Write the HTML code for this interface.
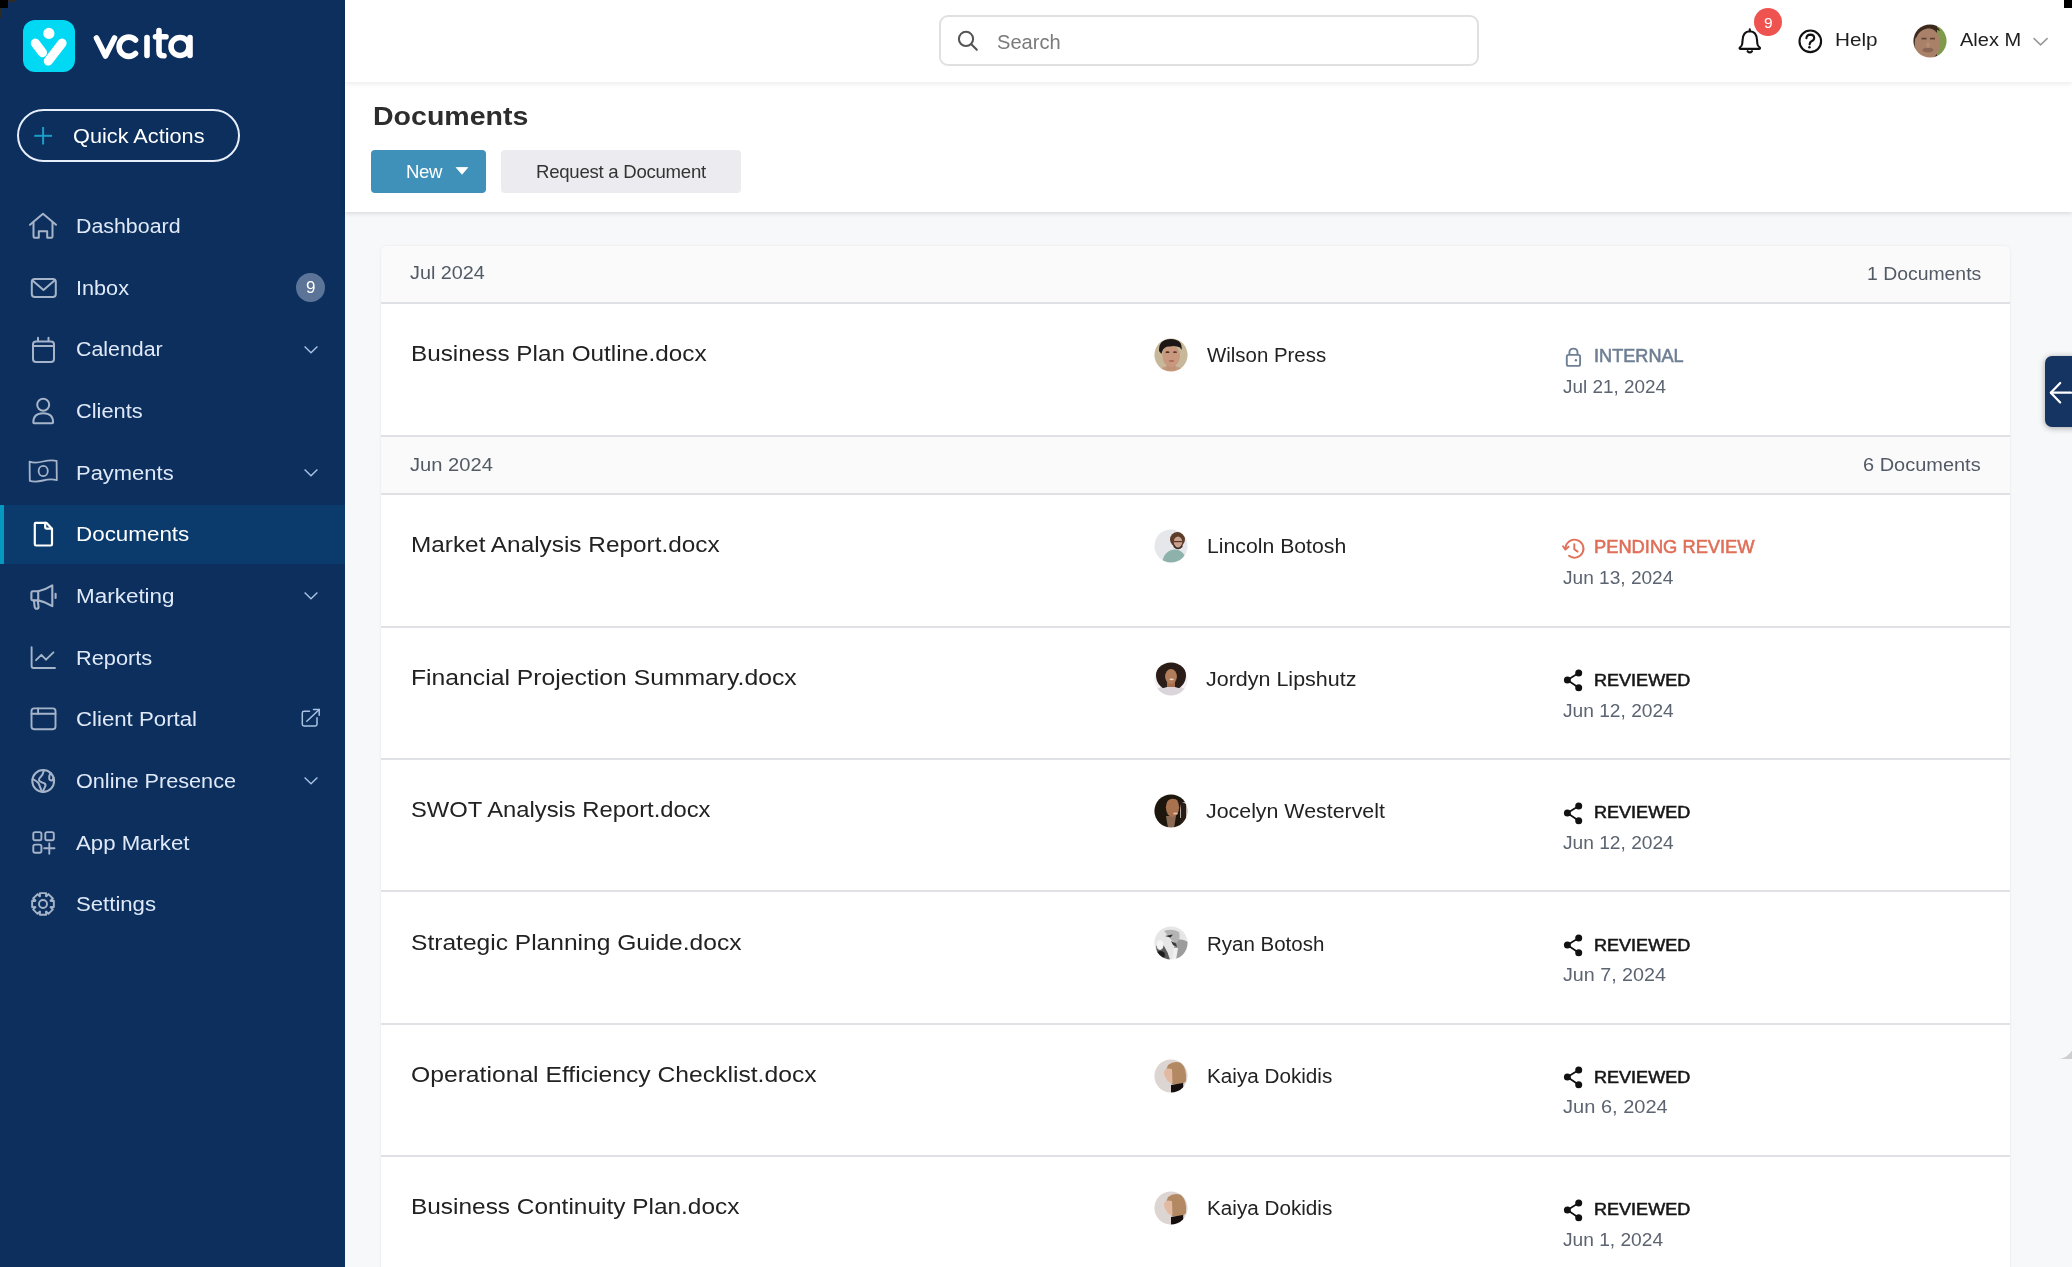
<!DOCTYPE html>
<html><head><meta charset="utf-8"><style>
html,body{margin:0;padding:0;width:2072px;height:1267px;overflow:hidden;background:#f7f8fa}
body{position:relative;font-family:"Liberation Sans",sans-serif}
.t{position:absolute;white-space:nowrap;line-height:1;will-change:transform}
svg{overflow:visible}
</style></head><body>
<svg width="0" height="0" style="position:absolute"><defs><filter id="blr" x="-10%" y="-10%" width="120%" height="120%"><feGaussianBlur stdDeviation="0.7"/></filter></defs></svg>
<div style="position:absolute;left:0;top:0;width:345px;height:1267px;background:#0c2f5e"></div>
<div style="position:absolute;left:0;top:505px;width:345px;height:59px;background:#0a3b6c"></div>
<div style="position:absolute;left:0;top:505px;width:4px;height:59px;background:#0798c0"></div>
<svg style="position:absolute;left:23px;top:20px" width="52" height="52" viewBox="0 0 52 52">
<rect x="0" y="0" width="52" height="52" rx="12" fill="#01d8f4"/>
<circle cx="25.9" cy="13.4" r="5.6" fill="#fff"/>
<line x1="12.4" y1="23.2" x2="19.4" y2="32.6" stroke="#fff" stroke-width="9.2" stroke-linecap="round"/>
<line x1="39" y1="23.2" x2="25.3" y2="41" stroke="#fff" stroke-width="9.2" stroke-linecap="round"/>
</svg>
<svg style="position:absolute;left:88px;top:22px" width="112" height="42" viewBox="88 22 112 42">
<g fill="none" stroke="#fff" stroke-width="5.6" stroke-linecap="round" stroke-linejoin="round">
<polyline points="96.5,38 105.5,56 114.5,38"/>
<path d="M135.5,40 A9.6,9.6 0 1 0 135.5,53.5"/>
<line x1="147" y1="37.5" x2="147" y2="55.5"/>
<path d="M159,30.5 L159,51.5 Q159,55.8 164,55.8"/>
<line x1="155.5" y1="36.8" x2="166" y2="36.8"/>
<circle cx="180" cy="46.5" r="9"/>
<line x1="190" y1="37.5" x2="190" y2="55.5"/>
</g></svg>
<div style="position:absolute;left:17px;top:109px;width:223px;height:53px;box-sizing:border-box;border:2px solid #e6eefa;border-radius:27px"></div>
<svg style="position:absolute;left:33px;top:126px" width="20" height="20" viewBox="0 0 20 20">
<g stroke="#1b9ec8" stroke-width="2"><line x1="10.1" y1="1" x2="10.1" y2="18.5"/><line x1="1.3" y1="9.8" x2="19" y2="9.8"/></g></svg>
<div class="t" style="left:72.60px;top:126.89px;font-size:19.50px;color:#ffffff;transform:scaleX(1.1132);transform-origin:0 0;">Quick Actions</div>
<div class="t" style="left:75.60px;top:217.19px;font-size:19.50px;color:#dfe9f7;transform:scaleX(1.0955);transform-origin:0 0;">Dashboard</div>
<div class="t" style="left:75.60px;top:278.84px;font-size:19.50px;color:#dfe9f7;transform:scaleX(1.1112);transform-origin:0 0;">Inbox</div>
<div class="t" style="left:75.60px;top:340.49px;font-size:19.50px;color:#dfe9f7;transform:scaleX(1.0957);transform-origin:0 0;">Calendar</div>
<div class="t" style="left:75.60px;top:402.14px;font-size:19.50px;color:#dfe9f7;transform:scaleX(1.1189);transform-origin:0 0;">Clients</div>
<div class="t" style="left:75.60px;top:463.79px;font-size:19.50px;color:#dfe9f7;transform:scaleX(1.1258);transform-origin:0 0;">Payments</div>
<div class="t" style="left:75.60px;top:525.44px;font-size:19.50px;color:#ffffff;transform:scaleX(1.1487);transform-origin:0 0;">Documents</div>
<div class="t" style="left:75.60px;top:587.09px;font-size:19.50px;color:#dfe9f7;transform:scaleX(1.1515);transform-origin:0 0;">Marketing</div>
<div class="t" style="left:75.60px;top:648.74px;font-size:19.50px;color:#dfe9f7;transform:scaleX(1.1162);transform-origin:0 0;">Reports</div>
<div class="t" style="left:75.60px;top:710.39px;font-size:19.50px;color:#dfe9f7;transform:scaleX(1.1392);transform-origin:0 0;">Client Portal</div>
<div class="t" style="left:75.60px;top:772.04px;font-size:19.50px;color:#dfe9f7;transform:scaleX(1.1099);transform-origin:0 0;">Online Presence</div>
<div class="t" style="left:75.60px;top:833.69px;font-size:19.50px;color:#dfe9f7;transform:scaleX(1.1374);transform-origin:0 0;">App Market</div>
<div class="t" style="left:75.60px;top:895.34px;font-size:19.50px;color:#dfe9f7;transform:scaleX(1.1355);transform-origin:0 0;">Settings</div>
<svg style="position:absolute;left:23px;top:206.20px" width="40" height="40" viewBox="0 0 40 40"><g fill="none" stroke="#a6b4c9" stroke-width="2" stroke-linecap="round" stroke-linejoin="round"><path d="M7,18.8 L20,7.8 L33,18.8"/><path d="M10.5,16.5 L10.5,30.6 Q10.5,31.8 11.7,31.8 L15.8,31.8 L15.8,25.2 L24.2,25.2 L24.2,31.8 L28.3,31.8 Q29.5,31.8 29.5,30.6 L29.5,16.5"/></g></svg>
<svg style="position:absolute;left:23px;top:261.85px" width="40" height="40" viewBox="0 0 40 40"><g fill="none" stroke="#a6b4c9" stroke-width="2" stroke-linecap="round" stroke-linejoin="round"><rect x="8.8" y="17" width="24" height="18" rx="3"/><path d="M9.5,18.5 L20.5,28 L31.5,18.5"/></g></svg>
<svg style="position:absolute;left:23px;top:323.50px" width="40" height="40" viewBox="0 0 40 40"><g fill="none" stroke="#a6b4c9" stroke-width="2" stroke-linecap="round" stroke-linejoin="round"><rect x="10" y="17.5" width="21" height="20.5" rx="3"/><line x1="10" y1="22" x2="31" y2="22"/><line x1="15" y1="13.8" x2="15" y2="17"/><line x1="25.5" y1="13.8" x2="25.5" y2="17"/></g></svg>
<svg style="position:absolute;left:23px;top:385.15px" width="40" height="40" viewBox="0 0 40 40"><g fill="none" stroke="#a6b4c9" stroke-width="2" stroke-linecap="round" stroke-linejoin="round"><circle cx="20.2" cy="19.8" r="6"/><path d="M10.3,37.5 Q10.3,28.3 20.2,28.3 Q30.1,28.3 30.1,37.5 Q30.1,38.3 29.2,38.3 L11.2,38.3 Q10.3,38.3 10.3,37.5 Z"/></g></svg>
<svg style="position:absolute;left:23px;top:446.80px" width="40" height="40" viewBox="0 0 40 40"><g fill="none" stroke="#a6b4c9" stroke-width="1.8" stroke-linecap="round" stroke-linejoin="round"><path d="M6.6,14.6 Q12,16.5 20,14.5 Q28,12.5 33.6,13.8 L33.8,33.2 Q28,31.6 20,33.5 Q12,35.4 6.8,33.8 Z"/><ellipse cx="20.2" cy="24" rx="4.6" ry="5.2"/></g></svg>
<svg style="position:absolute;left:23px;top:508.45px" width="40" height="40" viewBox="0 0 40 40"><g fill="none" stroke="#ffffff" stroke-width="2.2" stroke-linecap="round" stroke-linejoin="round"><path d="M12.5,14.8 Q11.8,14.8 11.8,16 L11.8,36.3 Q11.8,37.5 13,37.5 L27.8,37.5 Q29,37.5 29,36.3 L29,20.8 L23.4,14.8 Z"/><path d="M22.2,14.8 L22.2,19.6 Q22.2,20.6 23.2,20.6 L28.6,20.6"/></g></svg>
<svg style="position:absolute;left:23px;top:572.60px" width="40" height="40" viewBox="0 0 40 40"><g fill="none" stroke="#a6b4c9" stroke-width="2.1" stroke-linecap="round" stroke-linejoin="round"><path d="M9.8,18.2 L15.2,18.2 Q22,17 29.3,12.4 L29.3,33.2 Q22,28.6 15.2,27.4 L9.8,27.4 Q8.4,27.4 8.4,26 L8.4,19.6 Q8.4,18.2 9.8,18.2 Z"/><line x1="15.2" y1="18.2" x2="15.2" y2="27.4"/><path d="M11,27.6 L11.6,33.6 Q12,36 14,35.8 Q15.8,35.5 15.5,33.4 L14.8,28"/><line x1="32.6" y1="20.8" x2="32.6" y2="25"/></g></svg>
<svg style="position:absolute;left:23px;top:631.75px" width="40" height="40" viewBox="0 0 40 40"><g fill="none" stroke="#a6b4c9" stroke-width="1.9" stroke-linecap="round" stroke-linejoin="round"><path d="M8.6,15.3 L8.6,34 Q8.6,36 10.6,36 L32,36"/><polyline points="13,28.2 18.4,22.8 23,27.7 30.4,20.3"/></g></svg>
<svg style="position:absolute;left:23px;top:693.40px" width="40" height="40" viewBox="0 0 40 40"><g fill="none" stroke="#a6b4c9" stroke-width="1.9" stroke-linecap="round" stroke-linejoin="round"><rect x="8.5" y="15.4" width="24" height="20.8" rx="2.6"/><line x1="8.5" y1="20.8" x2="32.5" y2="20.8"/><line x1="15.1" y1="15.4" x2="15.1" y2="20.8"/></g></svg>
<svg style="position:absolute;left:23px;top:755.05px" width="40" height="40" viewBox="0 0 40 40"><g fill="none" stroke="#a6b4c9" stroke-width="2" stroke-linecap="round" stroke-linejoin="round"><circle cx="20.2" cy="26" r="10.9"/><path d="M20.9,15.5 Q20,19.5 17.8,21.8 Q15,24.5 16.5,26 Q18.5,27.4 21.5,28.4 Q23.4,29.8 21.8,32.2 Q20.4,34.5 20.2,36.8"/><path d="M9.8,24.2 Q13.8,26.2 15.4,28 Q16.6,30.5 17,32 Q18,34.4 19,36.2"/><path d="M27.6,17.8 Q25.6,21.5 26.2,24 Q27.2,26 29.3,25.4 Q30.4,23.8 30.5,22.5"/></g></svg>
<svg style="position:absolute;left:23px;top:816.70px" width="40" height="40" viewBox="0 0 40 40"><g fill="none" stroke="#a6b4c9" stroke-width="1.9" stroke-linecap="round" stroke-linejoin="round"><rect x="10.3" y="15.1" width="8.1" height="8.1" rx="1.8"/><rect x="22.3" y="15.1" width="8.5" height="8.1" rx="1.8"/><rect x="10.3" y="27.6" width="8.1" height="8.1" rx="1.8"/><line x1="26.3" y1="26.4" x2="26.3" y2="36.8"/><line x1="21.2" y1="31.2" x2="31.5" y2="31.2"/></g></svg>
<svg style="position:absolute;left:23px;top:878.35px" width="40" height="40" viewBox="0 0 40 40"><g fill="none" stroke="#a6b4c9" stroke-width="1.9" stroke-linecap="round" stroke-linejoin="round"><path d="M27.75,22.97 L30.85,22.80 L30.85,29.10 L27.75,28.93 L27.58,29.32 L29.90,31.39 L25.44,35.85 L23.37,33.53 L22.98,33.70 L23.15,36.80 L16.85,36.80 L17.02,33.70 L16.63,33.53 L14.56,35.85 L10.10,31.39 L12.42,29.32 L12.25,28.93 L9.15,29.10 L9.15,22.80 L12.25,22.97 L12.42,22.58 L10.10,20.51 L14.56,16.05 L16.63,18.37 L17.02,18.20 L16.85,15.10 L23.15,15.10 L22.98,18.20 L23.37,18.37 L25.44,16.05 L29.90,20.51 L27.58,22.58 Z"/><circle cx="20" cy="25.95" r="4"/></g></svg>
<svg style="position:absolute;left:302px;top:343.80px" width="18" height="12" viewBox="0 0 18 12"><polyline points="2.6,2.5 9,8.8 15.4,2.5" fill="none" stroke="#a9c3e4" stroke-width="1.4"/></svg>
<svg style="position:absolute;left:302px;top:467.10px" width="18" height="12" viewBox="0 0 18 12"><polyline points="2.6,2.5 9,8.8 15.4,2.5" fill="none" stroke="#a9c3e4" stroke-width="1.4"/></svg>
<svg style="position:absolute;left:302px;top:590.40px" width="18" height="12" viewBox="0 0 18 12"><polyline points="2.6,2.5 9,8.8 15.4,2.5" fill="none" stroke="#a9c3e4" stroke-width="1.4"/></svg>
<svg style="position:absolute;left:302px;top:775.35px" width="18" height="12" viewBox="0 0 18 12"><polyline points="2.6,2.5 9,8.8 15.4,2.5" fill="none" stroke="#a9c3e4" stroke-width="1.4"/></svg>
<div style="position:absolute;left:296px;top:273px;width:29px;height:29px;border-radius:50%;background:#5b7497"></div>
<div class="t" style="left:305.80px;top:279.11px;font-size:17.00px;color:#ffffff;letter-spacing:0.000px;">9</div>
<svg style="position:absolute;left:298px;top:705px" width="26" height="26" viewBox="298 705 26 26">
<g fill="none" stroke="#a9c3e4" stroke-width="1.5" stroke-linecap="round"><path d="M309.5,711.3 L304,711.3 Q302.3,711.3 302.3,713 L302.3,724.3 Q302.3,726 304,726 L315.3,726 Q317,726 317,724.3 L317,717.8"/>
<line x1="306.8" y1="721.3" x2="319" y2="709.7"/><polyline points="313.5,709.6 319.2,709.6 319.2,715.2"/></g></svg>
<div style="position:absolute;left:345px;top:0;width:1727px;height:1267px;background:#f7f8fa"></div>
<div style="position:absolute;left:345px;top:82px;width:1727px;height:129.5px;background:#fff;box-shadow:0 2px 4px rgba(0,0,0,0.11)"></div>
<div style="position:absolute;left:345px;top:0;width:1727px;height:82.2px;background:#fff;box-shadow:0 2px 5px rgba(0,0,0,0.075)"></div>
<div style="position:absolute;left:938.5px;top:15.3px;width:540px;height:51px;box-sizing:border-box;border:2px solid #e0e0e0;border-radius:9px;background:#fff"></div>
<svg style="position:absolute;left:950px;top:25px" width="35" height="35" viewBox="950 25 35 35">
<g fill="none" stroke="#555" stroke-width="2.1" stroke-linecap="round"><circle cx="966" cy="38.9" r="7.1"/><line x1="971.3" y1="44.3" x2="976.8" y2="49.8"/></g></svg>
<div class="t" style="left:996.60px;top:32.66px;font-size:19.30px;color:#7a7a7a;transform:scaleX(1.0418);transform-origin:0 0;">Search</div>
<svg style="position:absolute;left:1730px;top:22px" width="40" height="40" viewBox="1730 22 40 40">
<g fill="none" stroke="#111" stroke-width="2.1" stroke-linecap="round" stroke-linejoin="round">
<path d="M1749.8,31.2 Q1743,31.5 1742.6,40 L1742.2,44 Q1742,46 1739.8,47.5 Q1739,48.9 1740.6,48.9 L1759,48.9 Q1760.5,48.9 1759.8,47.5 Q1757.6,46 1757.4,44 L1757,40 Q1756.6,31.5 1749.8,31.2 Z"/>
<line x1="1749.8" y1="29.4" x2="1749.8" y2="31"/>
<path d="M1747.6,51.2 Q1749.8,53.6 1752,51.2"/></g></svg>
<div style="position:absolute;left:1753.8px;top:7.9px;width:28.4px;height:28.4px;border-radius:50%;background:#ef5350"></div>
<div class="t" style="left:1763.50px;top:14.88px;font-size:15.50px;color:#ffffff;letter-spacing:0.000px;">9</div>
<svg style="position:absolute;left:1796px;top:28px" width="28" height="28" viewBox="1796 28 28 28">
<g fill="none" stroke="#111" stroke-width="2.1" stroke-linecap="round"><circle cx="1810.3" cy="41.3" r="10.8"/>
<path d="M1806.4,38.3 Q1806.6,34.6 1810.4,34.6 Q1814.2,34.7 1814.2,38 Q1814.2,40.2 1811.5,41.3 Q1809.8,42.2 1809.6,44.4"/></g>
<circle cx="1809.4" cy="47.3" r="1.3" fill="#111"/></svg>
<div class="t" style="left:1834.70px;top:31.40px;font-size:18.90px;color:#1e1e1e;transform:scaleX(1.0958);transform-origin:0 0;">Help</div>
<div class="t" style="left:1960.00px;top:31.40px;font-size:18.90px;color:#1e1e1e;transform:scaleX(1.0596);transform-origin:0 0;">Alex M</div>
<svg style="position:absolute;left:2030px;top:33px" width="22" height="16" viewBox="2030 33 22 16">
<polyline points="2033.6,38.2 2040.6,44.8 2047.6,38.2" fill="none" stroke="#9a9a9a" stroke-width="1.6"/></svg>
<div class="t" style="left:373.00px;top:102.79px;font-size:26.00px;color:#2d2d2d;transform:scaleX(1.0977);transform-origin:0 0;font-weight:700;">Documents</div>
<div style="position:absolute;left:371.1px;top:149.7px;width:115.1px;height:42.9px;border-radius:4px;background:#3f91b9"></div>
<div class="t" style="left:406.30px;top:162.85px;font-size:18.60px;color:#ffffff;letter-spacing:-0.428px;">New</div>
<svg style="position:absolute;left:454px;top:165px" width="16" height="12" viewBox="454 165 16 12">
<path d="M456.2,167.5 L467.8,167.5 L462,174.3 Z" fill="#fff" stroke="#fff" stroke-width="0.8" stroke-linejoin="round"/></svg>
<div style="position:absolute;left:501.2px;top:149.7px;width:240.2px;height:42.9px;border-radius:4px;background:#ececf0"></div>
<div class="t" style="left:536.40px;top:162.85px;font-size:18.60px;color:#333333;letter-spacing:-0.266px;">Request a Document</div>
<div style="position:absolute;left:381px;top:246px;width:1629px;height:1100px;background:#fff;border-radius:6px 6px 0 0;box-shadow:0 0 3px rgba(0,0,0,0.08)"></div>
<div style="position:absolute;left:381px;top:246px;width:1629px;height:56px;background:#fafafa;border-radius:6px 6px 0 0"></div>
<div style="position:absolute;left:381px;top:301.60px;width:1629px;height:2px;background:#dfe1e4"></div>
<div class="t" style="left:410.00px;top:264.40px;font-size:18.90px;color:#525a65;transform:scaleX(1.0481);transform-origin:0 0;">Jul 2024</div>
<div class="t" style="left:1866.90px;top:265.20px;font-size:18.90px;color:#525a65;transform:scaleX(1.0264);transform-origin:0 0;">1 Documents</div>
<div style="position:absolute;left:381px;top:436.5px;width:1629px;height:56.4px;background:#fafafa"></div>
<div style="position:absolute;left:381px;top:434.50px;width:1629px;height:2px;background:#dfe1e4"></div>
<div style="position:absolute;left:381px;top:492.90px;width:1629px;height:2px;background:#dfe1e4"></div>
<div class="t" style="left:410.00px;top:456.30px;font-size:18.90px;color:#525a65;transform:scaleX(1.0659);transform-origin:0 0;">Jun 2024</div>
<div class="t" style="left:1863.40px;top:455.60px;font-size:18.90px;color:#525a65;transform:scaleX(1.0569);transform-origin:0 0;">6 Documents</div>
<div class="t" style="left:411.00px;top:343.15px;font-size:22.50px;color:#222222;transform:scaleX(1.0793);transform-origin:0 0;">Business Plan Outline.docx</div>
<svg style="position:absolute;left:1153.50px;top:337.60px" width="34" height="34" viewBox="0 0 34 34"><defs><clipPath id="c0"><circle cx="17" cy="17" r="16.6"/></clipPath><filter id="f0" x="-5" y="-5" width="44" height="44" filterUnits="userSpaceOnUse"><feGaussianBlur stdDeviation="0.6"/></filter></defs><g clip-path="url(#c0)"><g filter="url(#f0)"><rect width="34" height="34" fill="#c7b89a"/><ellipse cx="17" cy="34" rx="13" ry="6" fill="#c49a7e"/><rect x="12.5" y="24" width="9" height="8" fill="#c09276"/><ellipse cx="17.2" cy="18" rx="8.8" ry="11" fill="#c8997e"/><path d="M5,13 Q4.5,1 17,1 Q29,1.5 27.5,12 L26,9.5 Q21,7 16,8.5 Q10,8 8,14 L7.5,16 Z" fill="#1f1915"/><ellipse cx="13.5" cy="14.2" rx="2" ry="0.9" fill="#4a2e22"/><ellipse cx="21" cy="14.2" rx="2" ry="0.9" fill="#5a3a2e"/><ellipse cx="17.5" cy="23" rx="2.8" ry="1" fill="#b06a5a"/></g></g></svg>
<div class="t" style="left:1207.20px;top:345.17px;font-size:20.00px;color:#222222;transform:scaleX(1.0206);transform-origin:0 0;">Wilson Press</div>
<svg style="position:absolute;left:1560px;top:347.30px" width="26" height="26" viewBox="0 0 26 26">
<g fill="none" stroke="#6f8095" stroke-width="1.9"><rect x="6.8" y="7.9" width="13.3" height="11" rx="1.6"/><path d="M9.4,7.9 L9.4,5.6 Q9.4,1.6 13.45,1.6 Q17.5,1.6 17.5,5.6 L17.5,7.9"/></g>
<circle cx="15.9" cy="13.2" r="1.2" fill="#6f8095"/></svg>
<div class="t" style="left:1594.30px;top:347.91px;font-size:17.70px;color:#6e7f93;transform:scaleX(1.0248);transform-origin:0 0;-webkit-text-stroke:0.55px #6e7f93;">INTERNAL</div>
<div class="t" style="left:1562.80px;top:377.50px;font-size:18.90px;color:#5b6470;letter-spacing:0.010px;">Jul 21, 2024</div>
<div class="t" style="left:411.00px;top:534.45px;font-size:22.50px;color:#222222;transform:scaleX(1.0824);transform-origin:0 0;">Market Analysis Report.docx</div>
<svg style="position:absolute;left:1153.50px;top:528.90px" width="34" height="34" viewBox="0 0 34 34"><defs><clipPath id="c1"><circle cx="17" cy="17" r="16.6"/></clipPath><filter id="f1" x="-5" y="-5" width="44" height="44" filterUnits="userSpaceOnUse"><feGaussianBlur stdDeviation="0.6"/></filter></defs><g clip-path="url(#c1)"><g filter="url(#f1)"><rect width="34" height="34" fill="#e5e7ea"/><path d="M8,34 Q10,21 21,20.5 Q31,21 33,34 Z" fill="#8db2ab"/><ellipse cx="23.5" cy="10.5" rx="7.5" ry="7.5" fill="#5b3d29"/><ellipse cx="24" cy="13" rx="4.2" ry="5.6" fill="#c9a08e"/><path d="M19.5,15 Q24,22 28.5,15 L28.5,18 Q24,22.5 19.5,18 Z" fill="#3d2a1f"/><rect x="20" y="12" width="8" height="1.2" fill="#5a3228"/></g></g></svg>
<div class="t" style="left:1207.20px;top:536.47px;font-size:20.00px;color:#222222;transform:scaleX(1.0610);transform-origin:0 0;">Lincoln Botosh</div>
<svg style="position:absolute;left:1560px;top:536.40px" width="28" height="26" viewBox="0 0 28 26">
<g fill="none" stroke="#e0705a" stroke-width="1.9" stroke-linecap="round" stroke-linejoin="round">
<path d="M5.5,12.8 A9,9 0 1 1 9,19.8"/><polyline points="3,10.3 5.4,13.6 8.6,10.8"/><polyline points="14.3,8.3 14.3,13.3 17.6,15.6"/></g></svg>
<div class="t" style="left:1593.70px;top:539.21px;font-size:17.70px;color:#df6f58;transform:scaleX(1.0342);transform-origin:0 0;-webkit-text-stroke:0.55px #df6f58;">PENDING REVIEW</div>
<div class="t" style="left:1562.80px;top:568.80px;font-size:18.90px;color:#5b6470;transform:scaleX(1.0101);transform-origin:0 0;">Jun 13, 2024</div>
<div style="position:absolute;left:381px;top:625.60px;width:1629px;height:2px;background:#dfe1e4"></div>
<div class="t" style="left:411.00px;top:667.15px;font-size:22.50px;color:#222222;transform:scaleX(1.0989);transform-origin:0 0;">Financial Projection Summary.docx</div>
<svg style="position:absolute;left:1153.50px;top:661.60px" width="34" height="34" viewBox="0 0 34 34"><defs><clipPath id="c2"><circle cx="17" cy="17" r="16.6"/></clipPath><filter id="f2" x="-5" y="-5" width="44" height="44" filterUnits="userSpaceOnUse"><feGaussianBlur stdDeviation="0.6"/></filter></defs><g clip-path="url(#c2)"><g filter="url(#f2)"><rect width="34" height="34" fill="#f2f0f2"/><path d="M2,34 Q4,22 17,22 Q30,22 32,34 Z" fill="#d9d3da"/><circle cx="17" cy="13.5" r="15" fill="#2b1e17"/><rect x="13" y="18" width="8" height="7" fill="#a66e4d"/><ellipse cx="17" cy="14.5" rx="5.9" ry="7.6" fill="#b27d5a"/><ellipse cx="17.6" cy="17.3" rx="2.2" ry="0.9" fill="#f0d8c8"/><path d="M2,34 L2,26 Q8,27 13,25 L21,25 Q26,27 32,26 L32,34 Z" fill="#dad4db"/></g></g></svg>
<div class="t" style="left:1205.80px;top:669.17px;font-size:20.00px;color:#222222;transform:scaleX(1.0737);transform-origin:0 0;">Jordyn Lipshutz</div>
<svg style="position:absolute;left:1560px;top:667.40px" width="26" height="26" viewBox="0 0 26 26">
<g stroke="#111" stroke-width="1.7"><line x1="7.4" y1="13" x2="18.7" y2="6"/><line x1="7.4" y1="13" x2="18.7" y2="20.8"/></g>
<g fill="#111"><circle cx="18.7" cy="6" r="3.5"/><circle cx="7.4" cy="13" r="3.5"/><circle cx="18.7" cy="20.8" r="3.5"/></g></svg>
<div class="t" style="left:1594.20px;top:672.04px;font-size:17.20px;color:#161616;transform:scaleX(1.0497);transform-origin:0 0;-webkit-text-stroke:0.55px #161616;">REVIEWED</div>
<div class="t" style="left:1562.80px;top:701.50px;font-size:18.90px;color:#5b6470;transform:scaleX(1.0137);transform-origin:0 0;">Jun 12, 2024</div>
<div style="position:absolute;left:381px;top:757.90px;width:1629px;height:2px;background:#dfe1e4"></div>
<div class="t" style="left:411.00px;top:799.45px;font-size:22.50px;color:#222222;transform:scaleX(1.0567);transform-origin:0 0;">SWOT Analysis Report.docx</div>
<svg style="position:absolute;left:1153.50px;top:793.90px" width="34" height="34" viewBox="0 0 34 34"><defs><clipPath id="c3"><circle cx="17" cy="17" r="16.6"/></clipPath><filter id="f3" x="-5" y="-5" width="44" height="44" filterUnits="userSpaceOnUse"><feGaussianBlur stdDeviation="0.6"/></filter></defs><g clip-path="url(#c3)"><g filter="url(#f3)"><rect width="34" height="34" fill="#1f1711"/><rect x="26" y="8" width="8" height="16" fill="#b9b0a8"/><path d="M12,22 L22,22 L20,34 L14,34 Z" fill="#8a6a55"/><ellipse cx="18.5" cy="13.2" rx="6.6" ry="10" fill="#a9724f"/><path d="M11,4 Q17,1 23,3 L26,8 Q22,4 17,5 Q13,6 12,10 Z" fill="#1f1711"/><ellipse cx="21.5" cy="19.5" rx="2.5" ry="1.1" fill="#e7b8a0"/><path d="M24,6 Q29,14 26,30 L32,28 L32,10 Z" fill="#2a1d15"/></g></g></svg>
<div class="t" style="left:1205.80px;top:801.47px;font-size:20.00px;color:#222222;transform:scaleX(1.0682);transform-origin:0 0;">Jocelyn Westervelt</div>
<svg style="position:absolute;left:1560px;top:799.70px" width="26" height="26" viewBox="0 0 26 26">
<g stroke="#111" stroke-width="1.7"><line x1="7.4" y1="13" x2="18.7" y2="6"/><line x1="7.4" y1="13" x2="18.7" y2="20.8"/></g>
<g fill="#111"><circle cx="18.7" cy="6" r="3.5"/><circle cx="7.4" cy="13" r="3.5"/><circle cx="18.7" cy="20.8" r="3.5"/></g></svg>
<div class="t" style="left:1594.20px;top:804.34px;font-size:17.20px;color:#161616;transform:scaleX(1.0497);transform-origin:0 0;-webkit-text-stroke:0.55px #161616;">REVIEWED</div>
<div class="t" style="left:1562.80px;top:833.80px;font-size:18.90px;color:#5b6470;transform:scaleX(1.0137);transform-origin:0 0;">Jun 12, 2024</div>
<div style="position:absolute;left:381px;top:890.20px;width:1629px;height:2px;background:#dfe1e4"></div>
<div class="t" style="left:411.00px;top:931.75px;font-size:22.50px;color:#222222;transform:scaleX(1.0919);transform-origin:0 0;">Strategic Planning Guide.docx</div>
<svg style="position:absolute;left:1153.50px;top:926.20px" width="34" height="34" viewBox="0 0 34 34"><defs><clipPath id="c4"><circle cx="17" cy="17" r="16.6"/></clipPath><filter id="f4" x="-5" y="-5" width="44" height="44" filterUnits="userSpaceOnUse"><feGaussianBlur stdDeviation="0.6"/></filter></defs><g clip-path="url(#c4)"><g filter="url(#f4)"><rect width="34" height="34" fill="#e6e6e6"/><path d="M20,14 Q28,12 34,16 L34,34 L19,34 Q21,24 20,14 Z" fill="#9c9c9c"/><path d="M2,20 Q6,16 10,20 Q14,26 16,34 L4,34 Z" fill="#5a5a5a"/><ellipse cx="6.5" cy="29" rx="4.5" ry="4" fill="#1e1e1e"/><ellipse cx="6" cy="19" rx="3.5" ry="5" fill="#f4f4f4"/><path d="M10,5 Q18,2 25,6 Q27,12 23,17 Q18,16 15,11 Z" fill="#b4b4b4"/><path d="M11,10 L19,8.5 L16.5,11.5 Z" fill="#2a2a2a"/><path d="M17,15 L22,17.5 L23,21 L19,19 Z" fill="#3a3a3a"/><path d="M20,22 L24,22 L22,34 L18,34 Z" fill="#f0f0f0"/></g></g></svg>
<div class="t" style="left:1207.20px;top:933.77px;font-size:20.00px;color:#222222;transform:scaleX(1.0243);transform-origin:0 0;">Ryan Botosh</div>
<svg style="position:absolute;left:1560px;top:932.00px" width="26" height="26" viewBox="0 0 26 26">
<g stroke="#111" stroke-width="1.7"><line x1="7.4" y1="13" x2="18.7" y2="6"/><line x1="7.4" y1="13" x2="18.7" y2="20.8"/></g>
<g fill="#111"><circle cx="18.7" cy="6" r="3.5"/><circle cx="7.4" cy="13" r="3.5"/><circle cx="18.7" cy="20.8" r="3.5"/></g></svg>
<div class="t" style="left:1594.20px;top:936.64px;font-size:17.20px;color:#161616;transform:scaleX(1.0497);transform-origin:0 0;-webkit-text-stroke:0.55px #161616;">REVIEWED</div>
<div class="t" style="left:1562.80px;top:966.10px;font-size:18.90px;color:#5b6470;transform:scaleX(1.0426);transform-origin:0 0;">Jun 7, 2024</div>
<div style="position:absolute;left:381px;top:1022.50px;width:1629px;height:2px;background:#dfe1e4"></div>
<div class="t" style="left:411.00px;top:1064.05px;font-size:22.50px;color:#222222;transform:scaleX(1.0969);transform-origin:0 0;">Operational Efficiency Checklist.docx</div>
<svg style="position:absolute;left:1153.50px;top:1058.50px" width="34" height="34" viewBox="0 0 34 34"><defs><clipPath id="c5"><circle cx="17" cy="17" r="16.6"/></clipPath><filter id="f5" x="-5" y="-5" width="44" height="44" filterUnits="userSpaceOnUse"><feGaussianBlur stdDeviation="0.6"/></filter></defs><g clip-path="url(#c5)"><g filter="url(#f5)"><rect width="34" height="34" fill="#dcd5d1"/><path d="M14,6 Q20,1.5 27,4 Q33,9 32,22 L28,26 L18,25 Q14,16 12.5,10 Z" fill="#b38963"/><path d="M10,13 Q10.5,10 14,9.5 L18,10 L18.5,24 Q15,24 13,21 Q11.5,18 10.5,16.5 Z" fill="#e2b9a1"/><path d="M17,26 L29,24 L30,34 L17,34 Z" fill="#15110d"/></g></g></svg>
<div class="t" style="left:1207.20px;top:1066.07px;font-size:20.00px;color:#222222;transform:scaleX(1.0342);transform-origin:0 0;">Kaiya Dokidis</div>
<svg style="position:absolute;left:1560px;top:1064.30px" width="26" height="26" viewBox="0 0 26 26">
<g stroke="#111" stroke-width="1.7"><line x1="7.4" y1="13" x2="18.7" y2="6"/><line x1="7.4" y1="13" x2="18.7" y2="20.8"/></g>
<g fill="#111"><circle cx="18.7" cy="6" r="3.5"/><circle cx="7.4" cy="13" r="3.5"/><circle cx="18.7" cy="20.8" r="3.5"/></g></svg>
<div class="t" style="left:1594.20px;top:1068.94px;font-size:17.20px;color:#161616;transform:scaleX(1.0497);transform-origin:0 0;-webkit-text-stroke:0.55px #161616;">REVIEWED</div>
<div class="t" style="left:1562.80px;top:1098.40px;font-size:18.90px;color:#5b6470;transform:scaleX(1.0608);transform-origin:0 0;">Jun 6, 2024</div>
<div style="position:absolute;left:381px;top:1154.90px;width:1629px;height:2px;background:#dfe1e4"></div>
<div class="t" style="left:411.00px;top:1196.45px;font-size:22.50px;color:#222222;transform:scaleX(1.0850);transform-origin:0 0;">Business Continuity Plan.docx</div>
<svg style="position:absolute;left:1153.50px;top:1190.90px" width="34" height="34" viewBox="0 0 34 34"><defs><clipPath id="c6"><circle cx="17" cy="17" r="16.6"/></clipPath><filter id="f6" x="-5" y="-5" width="44" height="44" filterUnits="userSpaceOnUse"><feGaussianBlur stdDeviation="0.6"/></filter></defs><g clip-path="url(#c6)"><g filter="url(#f6)"><rect width="34" height="34" fill="#dcd5d1"/><path d="M14,6 Q20,1.5 27,4 Q33,9 32,22 L28,26 L18,25 Q14,16 12.5,10 Z" fill="#b38963"/><path d="M10,13 Q10.5,10 14,9.5 L18,10 L18.5,24 Q15,24 13,21 Q11.5,18 10.5,16.5 Z" fill="#e2b9a1"/><path d="M17,26 L29,24 L30,34 L17,34 Z" fill="#15110d"/></g></g></svg>
<div class="t" style="left:1207.20px;top:1198.47px;font-size:20.00px;color:#222222;transform:scaleX(1.0342);transform-origin:0 0;">Kaiya Dokidis</div>
<svg style="position:absolute;left:1560px;top:1196.70px" width="26" height="26" viewBox="0 0 26 26">
<g stroke="#111" stroke-width="1.7"><line x1="7.4" y1="13" x2="18.7" y2="6"/><line x1="7.4" y1="13" x2="18.7" y2="20.8"/></g>
<g fill="#111"><circle cx="18.7" cy="6" r="3.5"/><circle cx="7.4" cy="13" r="3.5"/><circle cx="18.7" cy="20.8" r="3.5"/></g></svg>
<div class="t" style="left:1594.20px;top:1201.34px;font-size:17.20px;color:#161616;transform:scaleX(1.0497);transform-origin:0 0;-webkit-text-stroke:0.55px #161616;">REVIEWED</div>
<div class="t" style="left:1562.80px;top:1230.80px;font-size:18.90px;color:#5b6470;transform:scaleX(1.0133);transform-origin:0 0;">Jun 1, 2024</div>
<svg style="position:absolute;left:1913.00px;top:24.00px" width="34" height="34" viewBox="0 0 34 34"><defs><clipPath id="calex"><circle cx="17" cy="17" r="16.6"/></clipPath><filter id="falex" x="-5" y="-5" width="44" height="44" filterUnits="userSpaceOnUse"><feGaussianBlur stdDeviation="0.6"/></filter></defs><g clip-path="url(#calex)"><g filter="url(#falex)"><rect width="34" height="34" fill="#3b2c22"/><rect x="24" y="2" width="10" height="32" fill="#7f9a4b"/><ellipse cx="14.5" cy="19.5" rx="12.8" ry="15.5" fill="#a98169"/><path d="M1,12 Q3,1 15,0.5 Q25,1 27,7 Q21,3.5 14,4.5 Q6,6 3,14 Z" fill="#3a2a1f"/><rect x="8.5" y="13.8" width="5" height="1.6" fill="#5a3e30"/><rect x="17" y="13.8" width="5" height="1.6" fill="#5a3e30"/><ellipse cx="15" cy="26" rx="5.5" ry="2.5" fill="#8a6654"/><ellipse cx="15" cy="21" rx="2" ry="3" fill="#b58c72"/></g></g></svg>
<div style="position:absolute;left:2045px;top:355.6px;width:40px;height:71px;border-radius:7px;background:#163462;box-shadow:0 1px 6px rgba(0,0,0,0.35)"></div>
<svg style="position:absolute;left:2046px;top:378px" width="26" height="30" viewBox="2046 378 26 30">
<g fill="none" stroke="#fff" stroke-width="2.2" stroke-linecap="round" stroke-linejoin="round"><line x1="2051" y1="392.7" x2="2071" y2="392.7"/><polyline points="2060.2,383 2050.8,392.7 2060.2,402.4"/></g></svg>
<div style="position:absolute;left:0;top:0;width:8px;height:8px;background:#000"></div>
<div style="position:absolute;left:8px;top:0;width:8px;height:2px;background:#2e2b29"></div>
<div style="position:absolute;left:0;top:8px;width:2px;height:10px;background:#2e2b29"></div>
<svg style="position:absolute;left:2056px;top:1049px" width="16" height="11" viewBox="0 0 16 11"><path d="M1,10 Q9,10 14,4 Q15,2.5 16,1.5 L16,10 Z" fill="#cfcfd2"/></svg>
<div style="position:absolute;left:2064px;top:0;width:8px;height:8px;background:#000"></div>
</body></html>
